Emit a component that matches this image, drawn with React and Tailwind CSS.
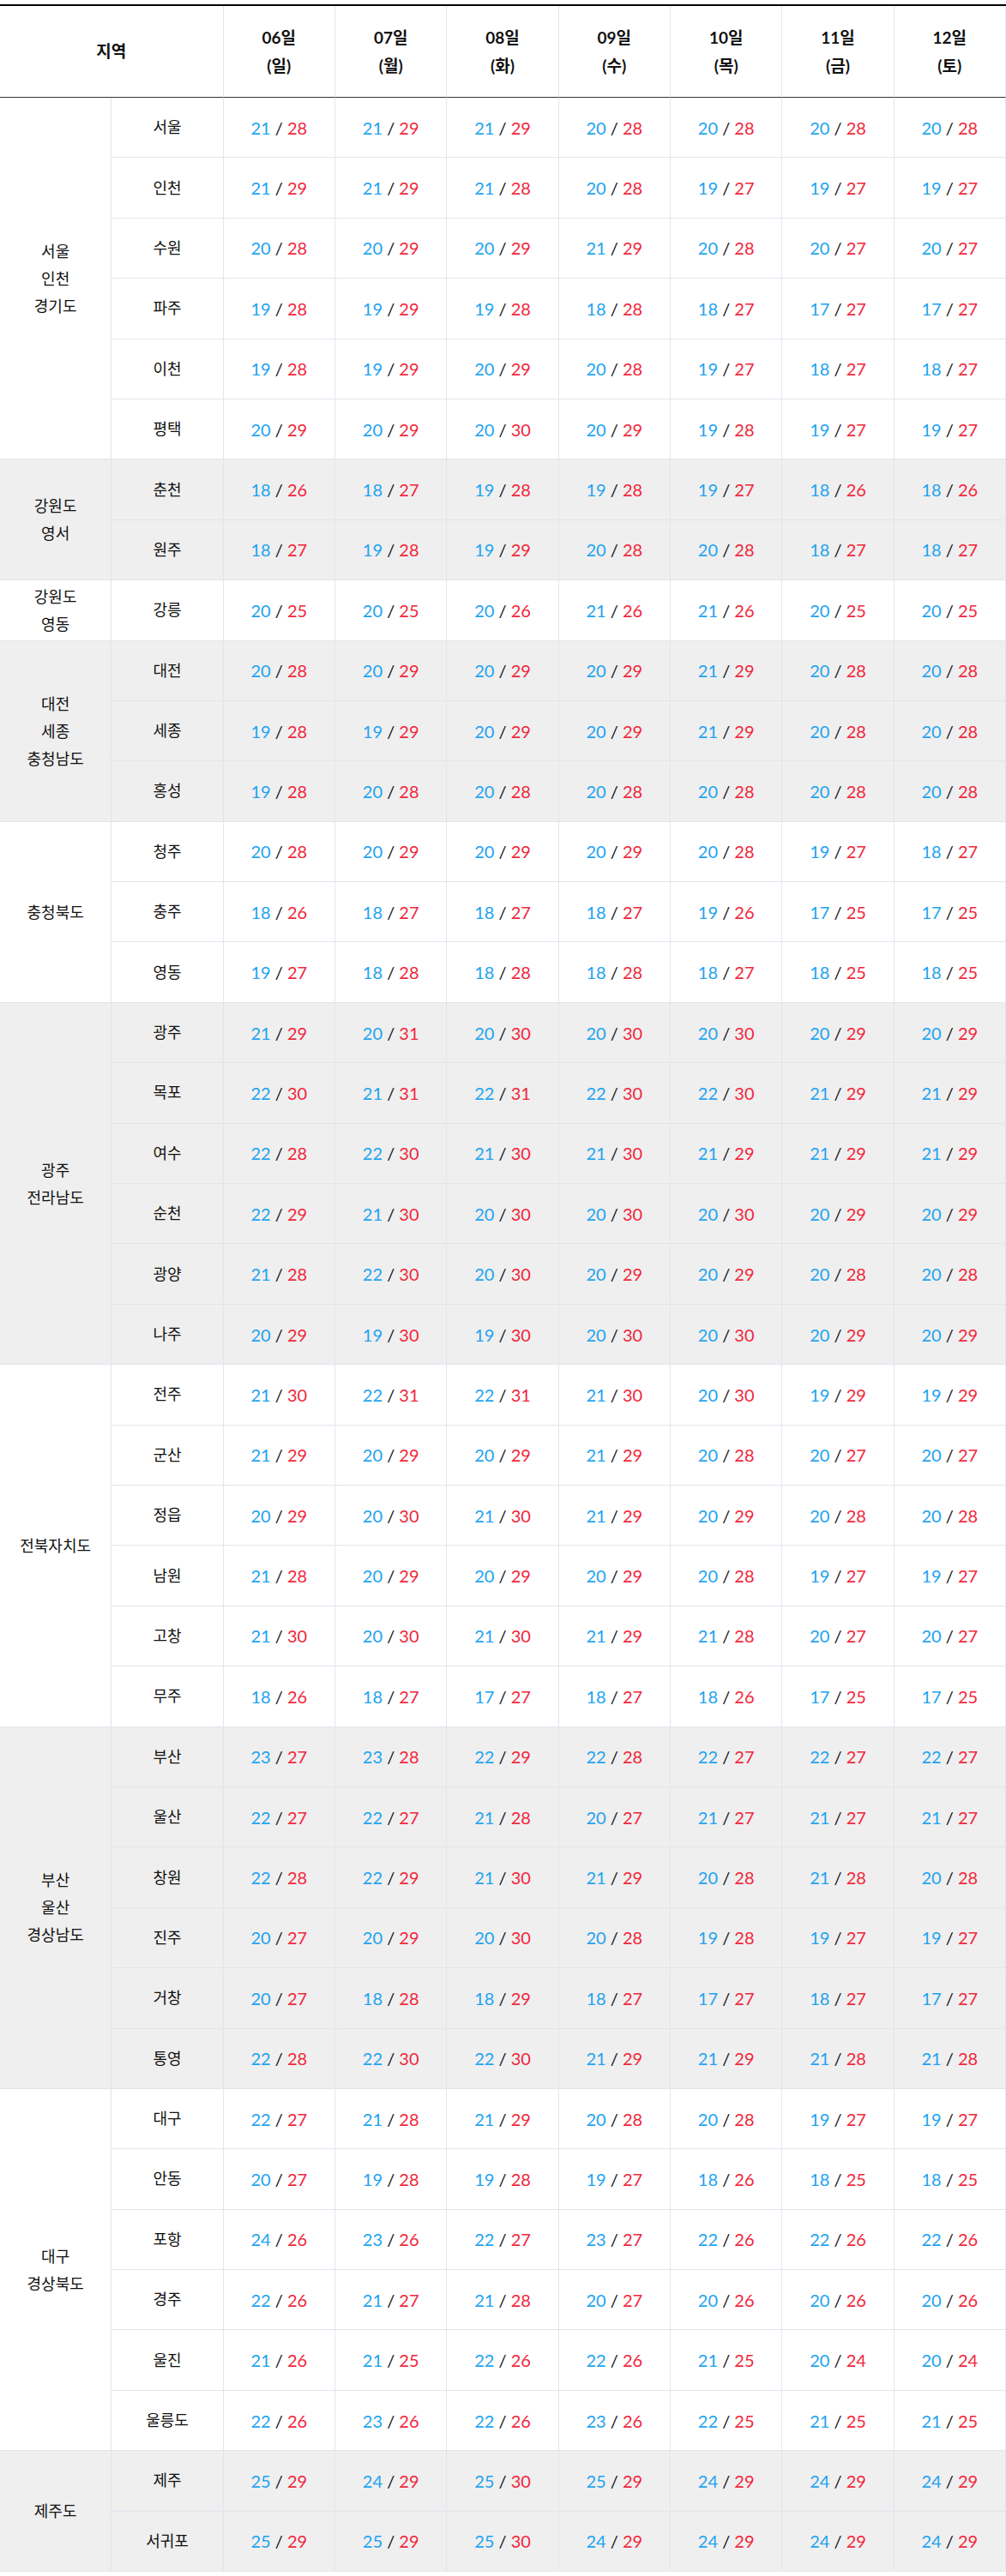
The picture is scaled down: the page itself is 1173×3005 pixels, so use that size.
const days = [
  ['06일', '(일)'],
  ['07일', '(월)'],
  ['08일', '(화)'],
  ['09일', '(수)'],
  ['10일', '(목)'],
  ['11일', '(금)'],
  ['12일', '(토)'],
];

const regions = [
  {
    name: ['서울', '인천', '경기도'],
    span: 'row-span-6',
    rows: [
      ['서울', '21/28 21/29 21/29 20/28 20/28 20/28 20/28'],
      ['인천', '21/29 21/29 21/28 20/28 19/27 19/27 19/27'],
      ['수원', '20/28 20/29 20/29 21/29 20/28 20/27 20/27'],
      ['파주', '19/28 19/29 19/28 18/28 18/27 17/27 17/27'],
      ['이천', '19/28 19/29 20/29 20/28 19/27 18/27 18/27'],
      ['평택', '20/29 20/29 20/30 20/29 19/28 19/27 19/27'],
    ],
  },
  {
    name: ['강원도', '영서'],
    span: 'row-span-2',
    rows: [
      ['춘천', '18/26 18/27 19/28 19/28 19/27 18/26 18/26'],
      ['원주', '18/27 19/28 19/29 20/28 20/28 18/27 18/27'],
    ],
  },
  {
    name: ['강원도', '영동'],
    span: 'row-span-1',
    rows: [['강릉', '20/25 20/25 20/26 21/26 21/26 20/25 20/25']],
  },
  {
    name: ['대전', '세종', '충청남도'],
    span: 'row-span-3',
    rows: [
      ['대전', '20/28 20/29 20/29 20/29 21/29 20/28 20/28'],
      ['세종', '19/28 19/29 20/29 20/29 21/29 20/28 20/28'],
      ['홍성', '19/28 20/28 20/28 20/28 20/28 20/28 20/28'],
    ],
  },
  {
    name: ['충청북도'],
    span: 'row-span-3',
    rows: [
      ['청주', '20/28 20/29 20/29 20/29 20/28 19/27 18/27'],
      ['충주', '18/26 18/27 18/27 18/27 19/26 17/25 17/25'],
      ['영동', '19/27 18/28 18/28 18/28 18/27 18/25 18/25'],
    ],
  },
  {
    name: ['광주', '전라남도'],
    span: 'row-span-6',
    rows: [
      ['광주', '21/29 20/31 20/30 20/30 20/30 20/29 20/29'],
      ['목포', '22/30 21/31 22/31 22/30 22/30 21/29 21/29'],
      ['여수', '22/28 22/30 21/30 21/30 21/29 21/29 21/29'],
      ['순천', '22/29 21/30 20/30 20/30 20/30 20/29 20/29'],
      ['광양', '21/28 22/30 20/30 20/29 20/29 20/28 20/28'],
      ['나주', '20/29 19/30 19/30 20/30 20/30 20/29 20/29'],
    ],
  },
  {
    name: ['전북자치도'],
    span: 'row-span-6',
    rows: [
      ['전주', '21/30 22/31 22/31 21/30 20/30 19/29 19/29'],
      ['군산', '21/29 20/29 20/29 21/29 20/28 20/27 20/27'],
      ['정읍', '20/29 20/30 21/30 21/29 20/29 20/28 20/28'],
      ['남원', '21/28 20/29 20/29 20/29 20/28 19/27 19/27'],
      ['고창', '21/30 20/30 21/30 21/29 21/28 20/27 20/27'],
      ['무주', '18/26 18/27 17/27 18/27 18/26 17/25 17/25'],
    ],
  },
  {
    name: ['부산', '울산', '경상남도'],
    span: 'row-span-6',
    rows: [
      ['부산', '23/27 23/28 22/29 22/28 22/27 22/27 22/27'],
      ['울산', '22/27 22/27 21/28 20/27 21/27 21/27 21/27'],
      ['창원', '22/28 22/29 21/30 21/29 20/28 21/28 20/28'],
      ['진주', '20/27 20/29 20/30 20/28 19/28 19/27 19/27'],
      ['거창', '20/27 18/28 18/29 18/27 17/27 18/27 17/27'],
      ['통영', '22/28 22/30 22/30 21/29 21/29 21/28 21/28'],
    ],
  },
  {
    name: ['대구', '경상북도'],
    span: 'row-span-6',
    rows: [
      ['대구', '22/27 21/28 21/29 20/28 20/28 19/27 19/27'],
      ['안동', '20/27 19/28 19/28 19/27 18/26 18/25 18/25'],
      ['포항', '24/26 23/26 22/27 23/27 22/26 22/26 22/26'],
      ['경주', '22/26 21/27 21/28 20/27 20/26 20/26 20/26'],
      ['울진', '21/26 21/25 22/26 22/26 21/25 20/24 20/24'],
      ['울릉도', '22/26 23/26 22/26 23/26 22/25 21/25 21/25'],
    ],
  },
  {
    name: ['제주도'],
    span: 'row-span-2',
    rows: [
      ['제주', '25/29 24/29 25/30 25/29 24/29 24/29 24/29'],
      ['서귀포', '25/29 25/29 25/30 24/29 24/29 24/29 24/29'],
    ],
  },
];

function Temp({ value }) {
  const [low, high] = value.split('/');
  return (
    <span className="text-[20px]">
      <span className="text-[#22a3f0]">{low}</span>
      <span className="text-[#111]"> / </span>
      <span className="text-[#f1263b]">{high}</span>
    </span>
  );
}

export default function App() {
  const cell = 'flex items-center justify-center border-r border-b border-[#e1e5ec] text-center';
  return (
    <main className="w-[1173px] bg-white pt-[5px] text-[#111] font-['Lato','Noto_Sans_CJK_KR',sans-serif]">
      <div className="grid grid-cols-9 grid-rows-[107px_repeat(41,70.4px)] border-t-2 border-black">
        <div className="col-span-2 flex items-center justify-center border-r border-r-[#e1e5ec] border-b border-b-[#333] text-[19px] font-bold">
          지역
        </div>
        {days.map(([d, w]) => (
          <div
            key={d}
            className="flex flex-col items-center justify-center border-r border-r-[#e1e5ec] border-b border-b-[#333] text-[19px] font-bold leading-[33px]"
          >
            <span>{d}</span>
            <span>{w}</span>
          </div>
        ))}
        {regions.map((region, gi) => {
          const bg = gi % 2 === 1 ? 'bg-[#efefef]' : 'bg-white';
          return region.rows.map(([city, temps], ri) => (
            <div key={city + gi} className="contents">
              {ri === 0 && (
                <div className={`${cell} ${bg} ${region.span} col-start-1 flex-col text-[18px] leading-[32px]`}>
                  {region.name.map((n) => (
                    <span key={n}>{n}</span>
                  ))}
                </div>
              )}
              <div className={`${cell} ${bg} col-start-2 text-[18px]`}>{city}</div>
              {temps.split(' ').map((t, i) => (
                <div key={i} className={`${cell} ${bg}`}>
                  <Temp value={t} />
                </div>
              ))}
            </div>
          ));
        })}
      </div>
    </main>
  );
}
